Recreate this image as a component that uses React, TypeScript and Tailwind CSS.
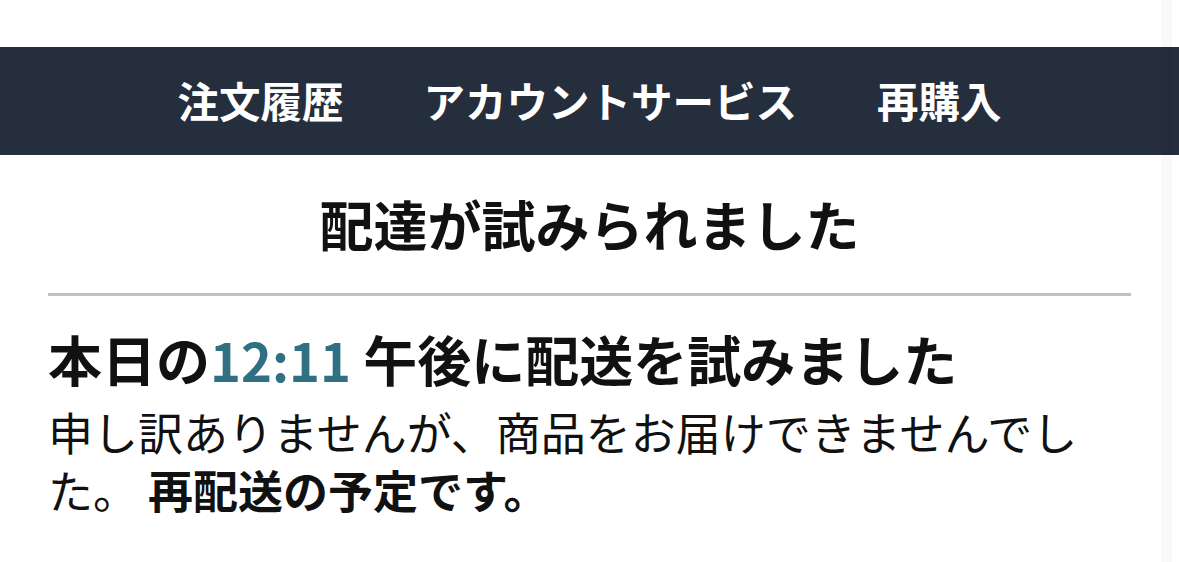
export default function App() {
  const font = { fontFamily: '"Noto Sans CJK JP", "Noto Sans", sans-serif' }
  return (
    <div className="relative min-h-[562px] bg-white text-[#111111]" style={font}>
      <div className="h-[47px]" />

      {/* Top nav */}
      <nav className="flex h-[108px] items-center justify-center gap-[80px] bg-[#252e3d] text-[41.5px] font-bold leading-none text-white">
        <span>注文履歴</span>
        <span>アカウントサービス</span>
        <span>再購入</span>
      </nav>

      {/* Title */}
      <div className="flex h-[138px] items-center justify-center">
        <h1 className="text-[54px] font-bold leading-none">配達が試みられました</h1>
      </div>
      <div className="mx-[48px] h-[3px] bg-[#c0c0c0]" />

      {/* Status */}
      <div className="px-[48px] pt-[28px]">
        <h2 className="text-[54px] font-bold leading-[70px]">
          本日の<span className="text-[52.5px] text-[#2f7183]">12:11</span> 午後に配送を試みました
        </h2>
        <p className="mt-[9px] text-[45px] leading-[58px]">
          申し訳ありませんが、商品をお届けできませんでした。 <span className="font-bold">再配送の予定です。</span>
        </p>
      </div>

      {/* scrollbar track */}
      <div className="absolute top-0 right-[7px] bottom-0 w-[11px] bg-black/[0.025]" />
    </div>
  )
}
